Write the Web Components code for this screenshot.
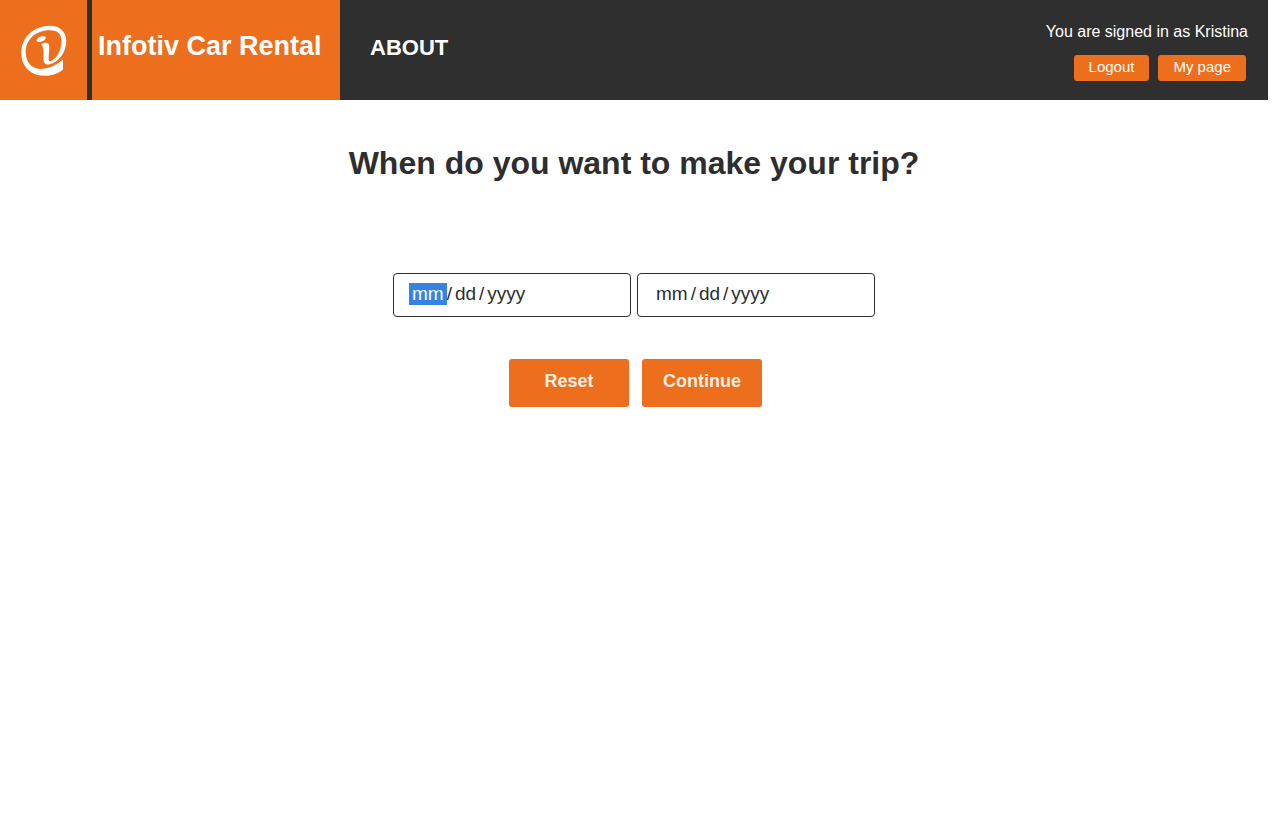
<!DOCTYPE html>
<html lang="en">
<head>
<meta charset="utf-8">
<title>Infotiv Car Rental</title>
<style>
  html { background: #fff; }
  body { margin: 0; padding-right: 12px; font-family: "Liberation Sans", Arial, sans-serif; color: #2e2e2e; }
</style>
</head>
<body>
<rental-header user="Kristina"></rental-header>
<trip-picker></trip-picker>
<script>
class AppButton extends HTMLElement {
  constructor() {
    super();
    this.attachShadow({ mode: "open" }).innerHTML = `
      <style>
        :host { display: block; }
        button { display: block; margin: 0; border: 0; border-radius: 3px; background: #ed6e1c;
          color: #fff; font-family: inherit; font-size: 15px; line-height: 18px; padding: 3px 15px 5px; }
        :host([large]) button { width: 120px; font-size: 18px; font-weight: bold; line-height: 20px;
          padding: 12px 0 16px; color: #fdeee3; }
      </style>
      <button type="button"><slot></slot></button>`;
  }
}
customElements.define("app-button", AppButton);

class RentalLogo extends HTMLElement {
  constructor() {
    super();
    this.attachShadow({ mode: "open" }).innerHTML = `
      <style>
        :host { display: block; width: 87px; height: 100px; background: #ed6e1c; }
        svg { display: block; }
      </style>
      <svg width="87" height="100" viewBox="0 0 87 100" fill="#fff" role="img" aria-label="Infotiv">
        <path fill-rule="evenodd" d="M63 59.500V69.500C58 74 51 76 44 75.700C30 75.500 21.300 66 21.300 53C21.300 37 34 25.800 50 25.800C60 25.800 66.300 32 66.300 41C66.300 53 58 62.500 49 64.500C45 65 43.300 62.500 43.500 58.500C43.800 54 43.500 50 42.500 46L41 44.500C43.500 42.500 46.500 42.300 48.300 43.500C49.800 45 49.300 50 48.800 55C48.300 60 48.800 62 50.500 61.200C56.500 59 61.500 50 61.500 41C61.500 34 57.500 30.200 50 30.200C35 30.200 25.700 40 25.700 52C25.700 62 31.500 68.500 40 69C48 69.200 56 65.500 63 59.500Z"/>
        <path d="M36.600 40.500C37 37.500 41 36 44 36.200C46.500 36.500 46.200 39 43.500 40.700C40.500 42.300 36.700 42.500 36.600 40.500Z"/>
      </svg>`;
  }
}
customElements.define("rental-logo", RentalLogo);

class RentalHeader extends HTMLElement {
  constructor() {
    super();
    this.attachShadow({ mode: "open" }).innerHTML = `
      <style>
        :host { display: block; background: #2f2f2f; color: #fff; }
        header { display: flex; align-items: stretch; min-height: 100px; }
        .brand { display: flex; gap: 5px; }
        h1 { box-sizing: border-box; width: 248px; margin: 0; padding: 30px 6px 0; background: #ed6e1c;
          font-size: 27px; line-height: 32px; white-space: nowrap; }
        nav { padding: 36px 30px 0; }
        a { color: inherit; text-decoration: none; font-size: 22px; line-height: 24px; font-weight: bold; }
        .account { margin-left: auto; padding: 22px 20px 0 0; }
        p { margin: 0; font-size: 16px; line-height: 20px; }
        .actions { display: flex; justify-content: flex-end; gap: 9px; padding: 13px 2px 0 0; }
      </style>
      <header>
        <div class="brand"><rental-logo></rental-logo><h1>Infotiv Car Rental</h1></div>
        <nav><a href="#about">ABOUT</a></nav>
        <div class="account">
          <p></p>
          <div class="actions"><app-button>Logout</app-button><app-button>My page</app-button></div>
        </div>
      </header>`;
  }
  connectedCallback() {
    this.shadowRoot.querySelector("p").textContent = "You are signed in as " + this.getAttribute("user");
  }
}
customElements.define("rental-header", RentalHeader);

class DateField extends HTMLElement {
  constructor() {
    super();
    this.attachShadow({ mode: "open" }).innerHTML = `
      <style>
        :host { display: block; width: 238px; }
        input { display: block; box-sizing: border-box; width: 100%; height: 44px; margin: 0; padding: 0 15px 3px;
          border: 1px solid #2e2e2e; border-radius: 4px; background: #fff; color: #2e2e2e; outline: 0;
          font-family: inherit; font-size: 19px; line-height: 22px; }
        input::-webkit-calendar-picker-indicator { display: none; }
        input::-webkit-datetime-edit { padding: 0; }
        input::-webkit-datetime-edit-fields-wrapper { padding: 0; }
        input::-webkit-datetime-edit-month-field,
        input::-webkit-datetime-edit-day-field,
        input::-webkit-datetime-edit-year-field { padding: 0 3px 1px; color: #2e2e2e; }
        input::-webkit-datetime-edit-text { padding: 0; }
        :host([editing]) input::-webkit-datetime-edit-month-field { background: #3584e4; color: #fff; }
      </style>
      <input type="date">`;
  }
  connectedCallback() {
    this.shadowRoot.querySelector("input").setAttribute("aria-label", this.getAttribute("label"));
  }
}
customElements.define("date-field", DateField);

class TripPicker extends HTMLElement {
  constructor() {
    super();
    this.attachShadow({ mode: "open" }).innerHTML = `
      <style>
        :host { display: block; }
        main { display: flex; flex-direction: column; align-items: center; padding: 44px 20px; }
        h2 { margin: 0; font-size: 32px; line-height: 38px; text-align: center; }
        .dates { display: flex; flex-wrap: wrap; justify-content: center; gap: 6px; margin-top: 91px; }
        .actions { display: flex; gap: 13px; margin-top: 42px; padding-left: 3px; }
      </style>
      <main>
        <h2>When do you want to make your trip?</h2>
        <div class="dates">
          <date-field label="Start date" editing></date-field>
          <date-field label="End date"></date-field>
        </div>
        <div class="actions"><app-button large>Reset</app-button><app-button large>Continue</app-button></div>
      </main>`;
  }
}
customElements.define("trip-picker", TripPicker);
</script>
</body>
</html>
